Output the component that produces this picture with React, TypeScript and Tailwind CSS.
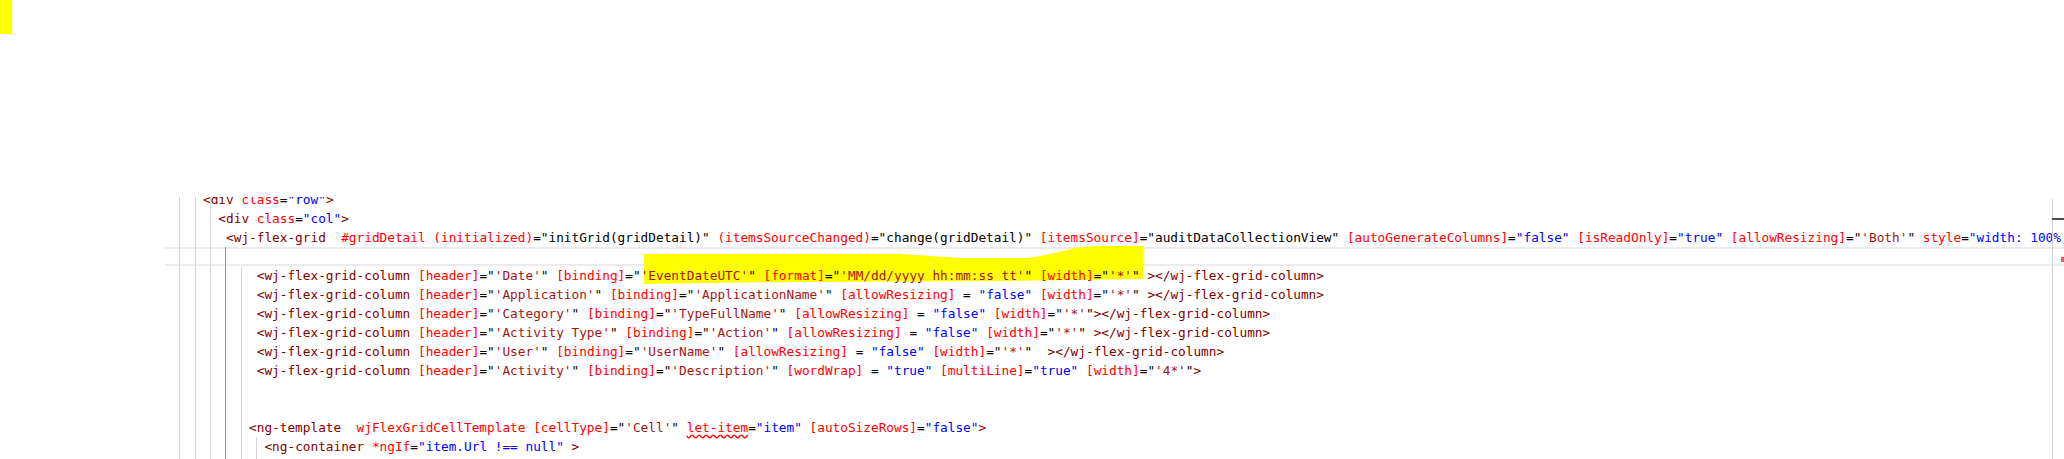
import React from 'react';

type Kind = 't' | 'a' | 'e' | 'v' | 's' | 'k' | 'w' | 'u';
type Tok = [Kind, string];

const colors: Record<Kind, string> = {
  t: 'text-[#800000]',
  a: 'text-[#ff0000]',
  e: 'text-black',
  v: 'text-[#0000ff]',
  s: 'text-[#a31515]',
  k: 'text-black',
  w: '',
  u: 'text-[#ff0000] underline decoration-wavy decoration-[#ff0000] underline-offset-2',
};

const sp: Tok = ['w', ' '];
const bind = (name: string, str: string, spaced = false): Tok[] => [
  ['a', name],
  ['e', spaced ? ' = ' : '='],
  ['k', '"'],
  ['s', `'${str}'`],
  ['k', '"'],
];
const val = (name: string, v: string, spaced = false): Tok[] => [
  ['a', name],
  ['e', spaced ? ' = ' : '='],
  ['v', `"${v}"`],
];
const code = (name: string, v: string): Tok[] => [
  ['a', name],
  ['e', '='],
  ['k', `"${v}"`],
];

const col = (...parts: (Tok | Tok[])[]): Tok[] => [
  ['t', '<wj-flex-grid-column'],
  sp,
  ...parts.flatMap((p) => (typeof p[0] === 'string' ? [p as Tok] : (p as Tok[]))),
];

const lines: { indent: number; toks: Tok[] }[] = [
  { indent: 0, toks: [['t', '<div'], sp, ...val('class', 'row'), ['t', '>']] },
  { indent: 2, toks: [['t', '<div'], sp, ...val('class', 'col'), ['t', '>']] },
  {
    indent: 3,
    toks: [
      ['t', '<wj-flex-grid'],
      ['w', '  '],
      ['a', '#gridDetail'],
      sp,
      ...code('(initialized)', 'initGrid(gridDetail)'),
      sp,
      ...code('(itemsSourceChanged)', 'change(gridDetail)'),
      sp,
      ...code('[itemsSource]', 'auditDataCollectionView'),
      sp,
      ...val('[autoGenerateColumns]', 'false'),
      sp,
      ...val('[isReadOnly]', 'true'),
      sp,
      ...bind('[allowResizing]', 'Both'),
      sp,
      ['a', 'style'],
      ['e', '='],
      ['v', '"width: 100%; height: 100%"'],
    ],
  },
  { indent: -1, toks: [] },
  {
    indent: 7,
    toks: col(bind('[header]', 'Date'), sp, bind('[binding]', 'EventDateUTC'), sp, bind('[format]', 'MM/dd/yyyy hh:mm:ss tt'), sp, bind('[width]', '*'), sp, ['t', '></wj-flex-grid-column>']),
  },
  {
    indent: 7,
    toks: col(bind('[header]', 'Application'), sp, bind('[binding]', 'ApplicationName'), sp, val('[allowResizing]', 'false', true), sp, bind('[width]', '*'), sp, ['t', '></wj-flex-grid-column>']),
  },
  {
    indent: 7,
    toks: col(bind('[header]', 'Category'), sp, bind('[binding]', 'TypeFullName'), sp, val('[allowResizing]', 'false', true), sp, bind('[width]', '*'), ['t', '></wj-flex-grid-column>']),
  },
  {
    indent: 7,
    toks: col(bind('[header]', 'Activity Type'), sp, bind('[binding]', 'Action'), sp, val('[allowResizing]', 'false', true), sp, bind('[width]', '*'), sp, ['t', '></wj-flex-grid-column>']),
  },
  {
    indent: 7,
    toks: col(bind('[header]', 'User'), sp, bind('[binding]', 'UserName'), sp, val('[allowResizing]', 'false', true), sp, bind('[width]', '*'), ['w', '  '], ['t', '></wj-flex-grid-column>']),
  },
  {
    indent: 7,
    toks: col(bind('[header]', 'Activity'), sp, bind('[binding]', 'Description'), sp, val('[wordWrap]', 'true', true), sp, val('[multiLine]', 'true'), sp, bind('[width]', '4*'), ['t', '>']),
  },
  { indent: 0, toks: [] },
  { indent: 0, toks: [] },
  {
    indent: 6,
    toks: [
      ['t', '<ng-template'],
      ['w', '  '],
      ['a', 'wjFlexGridCellTemplate'],
      sp,
      ...bind('[cellType]', 'Cell'),
      sp,
      ['u', 'let-item'],
      ['e', '='],
      ['v', '"item"'],
      sp,
      ...val('[autoSizeRows]', 'false'),
      ['t', '>'],
    ],
  },
  {
    indent: 8,
    toks: [['t', '<ng-container'], sp, ...val('*ngIf', 'item.Url !== null'), sp, ['t', '>']],
  },
];

// indent guides of the editor, drawn over the code
const guides = [
  { x: 179, top: 0 },
  { x: 195, top: 0 },
  { x: 210, top: 0 },
  { x: 225, top: 50, dark: true },
  { x: 241, top: 70 },
  { x: 256, top: 240 },
];

function CodeLine({ indent, toks }: { indent: number; toks: Tok[] }) {
  if (indent < 0) {
    return <div className="ml-[165px] h-[19px] border-y-2 border-[#ebebeb]" />;
  }
  return (
    <div className="relative z-10 h-[19px] whitespace-pre pl-[203px]">
      {' '.repeat(indent)}
      {toks.map(([k, s], i) => (
        <span key={i} className={colors[k]}>
          {s}
        </span>
      ))}
    </div>
  );
}

export default function App() {
  return (
    <div className="flex h-[459px] w-[2064px] flex-col gap-[163px] overflow-hidden bg-white">
      <div className="h-[34px] w-[12px] bg-[#ffff00]" />

      <div className="relative h-[262px] overflow-hidden font-['DejaVu_Sans_Mono',monospace] text-[12.75px] leading-[19px]">
        {/* highlighter mark */}
        <svg className="absolute left-0 top-0 z-0" width="2064" height="262">
          <path
            d="M644 57 L900 57 L960 61 L1030 61 L1050 57 L1075 51 L1095 49 L1143 49 L1143 82 L1000 84 L800 85 L700 86 L644 87 Z"
            fill="#ffff00"
          />
        </svg>

        {guides.map((g) => (
          <div
            key={g.x}
            className={`absolute bottom-0 z-20 w-px ${g.dark ? 'bg-[#9a9a9a]' : 'bg-[#d6d6d6]'}`}
            style={{ left: g.x, top: g.top }}
          />
        ))}

        <div className="-mt-[7px]">
          {lines.map((l, i) => (
            <CodeLine key={i} indent={l.indent} toks={l.toks} />
          ))}
        </div>

        {/* right edge of the editor */}
        <div className="absolute bottom-0 left-[2052px] top-[2px] z-20 w-px bg-[#d0d0d0]" />
        <div className="absolute left-[2052px] top-[21px] z-20 h-[2px] w-[12px] bg-[#4a4a4a]" />
        <div className="absolute left-[2061px] top-[60px] z-20 h-[5px] w-[3px] bg-[#f06060]" />
      </div>
    </div>
  );
}
